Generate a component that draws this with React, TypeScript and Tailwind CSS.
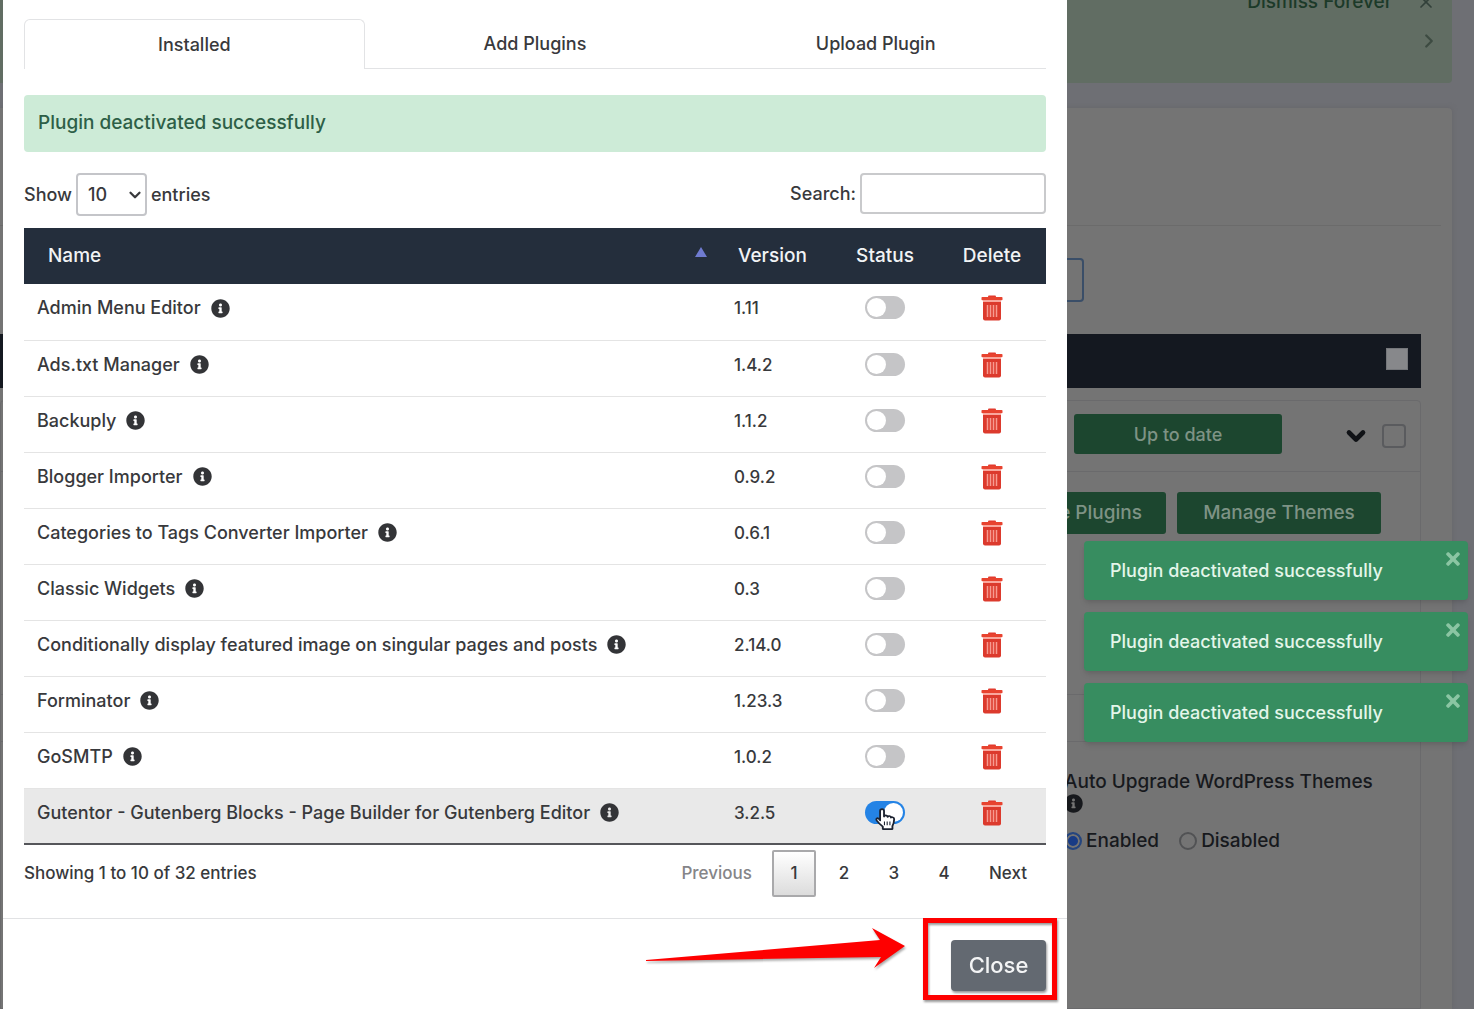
import React from "react";
import { ChevronDown, ChevronRight, X } from "lucide-react";
import { FaInfoCircle, FaTimes } from "react-icons/fa";

const plugins = [
  { name: "Admin Menu Editor", version: "1.11", active: false },
  { name: "Ads.txt Manager", version: "1.4.2", active: false },
  { name: "Backuply", version: "1.1.2", active: false },
  { name: "Blogger Importer", version: "0.9.2", active: false },
  { name: "Categories to Tags Converter Importer", version: "0.6.1", active: false },
  { name: "Classic Widgets", version: "0.3", active: false },
  { name: "Conditionally display featured image on singular pages and posts", version: "2.14.0", active: false },
  { name: "Forminator", version: "1.23.3", active: false },
  { name: "GoSMTP", version: "1.0.2", active: false },
  { name: "Gutentor - Gutenberg Blocks - Page Builder for Gutenberg Editor", version: "3.2.5", active: true },
];

function TrashIcon() {
  return (
    <svg viewBox="0 0 22 26" className="h-[26px] w-[22px]" aria-hidden="true">
      <path d="M7 3V1.600Q7 .6 8 .6h6q1 0 1 1V3" fill="#e23b2e" />
      <rect x="0.5" y="2" width="21" height="3.200" rx="0.8" fill="#e8432f" />
      <path d="M2 5h18v2H2z" fill="#f9a79d" />
      <path d="M2 7h18v16.500q0 2-2 2H4q-2 0-2-2z" fill="#dc3a2d" />
      <path d="M6.500 10v12M9.500 10v12M12.500 10v12M15.500 10v12" stroke="#f79a90" strokeWidth="1.500" />
    </svg>
  );
}

function HandCursor() {
  return (
    <svg viewBox="0 0 22 26" className="pointer-events-none absolute top-[6px] left-[8px] h-[25px] w-[24px]" preserveAspectRatio="none" aria-hidden="true">
      <path
        d="M6.500 14V4.200q0-2 1.800-2t1.800 2V10q.3-1.400 1.700-1.300 1.500.1 1.600 1.600.3-1 1.600-.9 1.400.2 1.500 1.600.5-.7 1.500-.4 1.500.4 1.400 2.200-.1 4-1.600 7V23H9v-2.500q-3-2.500-5.500-6.300-1-1.800.3-2.500 1.200-.6 2.700 2.300z"
        fill="#fff"
        stroke="#1c2230"
        strokeWidth="1.700"
        strokeLinejoin="round"
      />
      <path d="M10.500 15v4M13 15v4M15.500 15v4" stroke="#1c2230" strokeWidth="1" />
    </svg>
  );
}

function SitePage() {
  return (
    <main className="flex min-h-screen flex-col pr-[22px] text-[#17191d]">
      <section className="flex h-[83px] flex-col items-end gap-4 rounded-br bg-[#616d63] pr-4 text-[#1c3a29]">
        <div className="-mt-3 flex items-center gap-6">
          <button className="text-[19px] leading-7 font-medium">Dismiss Forever</button>
          <button aria-label="Dismiss"><X size={20} strokeWidth={2} className="text-[#32403a]" /></button>
        </div>
        <button aria-label="Next notice" className="-mt-[2px] -mr-1"><ChevronRight size={22} strokeWidth={2.5} className="text-[#3d4b42]" /></button>
      </section>

      <section className="mt-[25px] flex grow flex-col rounded-tr bg-[#747474] pr-[31px] shadow-[0_0_5px_#656569]">
        <div className="-mr-5 h-[118px] border-b border-[#6b6b6b]" />
        <div className="mt-8 flex justify-end pr-[337px]">
          <input aria-label="Filter installations" className="h-11 w-80 rounded border-2 border-[#3a4e68]" />
        </div>
        <div className="mt-8 flex h-[54px] items-center justify-end bg-[#141820] pr-[13px] pb-1">
          <input type="checkbox" aria-label="Select all" className="h-[22px] w-[22px] appearance-none border border-[#75777b] bg-[#87888b]" />
        </div>
        <div className="mt-3 flex grow flex-col rounded-t border border-[#6a6a6c]">
          <div className="flex h-[71px] items-center justify-end border-b border-[#6a6a6c] pr-[14px] pb-1">
            <button className="h-10 w-[208px] rounded-[3px] bg-[#1c462f] text-[18px] font-medium text-[#7e9385]">Up to date</button>
            <button aria-label="Show details" className="ml-[60px] pt-1"><ChevronDown size={28} strokeWidth={4} className="text-[#101216]" /></button>
            <input type="checkbox" aria-label="Select installation" className="mt-1 ml-3 h-6 w-6 appearance-none rounded border-2 border-[#5a5b5e]" />
          </div>
          <div className="mt-5 flex justify-end gap-[11px] pr-[39px] text-[19px] font-medium text-[#7e9385]">
            <button className="h-[42px] rounded-[3px] bg-[#1c462f] px-6">Manage Plugins</button>
            <button className="h-[42px] w-[204px] rounded-[3px] bg-[#1c462f]">Manage Themes</button>
          </div>
          <div className="mt-40 h-12 border-y border-[#6a6a6c]" />
          <fieldset className="mt-7 ml-auto w-[356px] text-[19px] leading-6 font-medium">
            <legend className="float-left">Auto Upgrade WordPress Themes</legend>
            <FaInfoCircle size={19} className="relative clear-both mt-[6px]" />
            <div className="mt-4 flex h-6 items-center">
              <label className="flex items-center gap-1">
                <input type="radio" name="themes" defaultChecked className="h-[18px] w-[18px] appearance-none rounded-full border-2 border-[#25457e] bg-[#183b85] shadow-[inset_0_0_0_2px_#747474]" />
                Enabled
              </label>
              <label className="ml-5 flex items-center gap-1">
                <input type="radio" name="themes" className="h-[18px] w-[18px] appearance-none rounded-full border-2 border-[#515254]" />
                Disabled
              </label>
            </div>
          </fieldset>
        </div>
      </section>
    </main>
  );
}

function PluginTable() {
  return (
    <table className="mt-3 w-full table-fixed border-collapse text-left text-[18px] leading-6 font-medium">
      <thead className="h-14 bg-[#242e3c] text-[19px] text-[#f1f3f5]">
        <tr>
          <th className="pr-[13px] pl-6 font-medium">
            <div className="flex items-center justify-between">
              Name
              <svg viewBox="0 0 12 10" className="mb-2 h-[10px] w-3" aria-hidden="true"><path d="M6 0l6 10H0z" fill="#6f7bd0" /></svg>
            </div>
          </th>
          <th className="w-28 pl-[18px] font-medium">Version</th>
          <th className="w-[106px] text-center font-medium">Status</th>
          <th className="w-[108px] text-center font-medium">Delete</th>
        </tr>
      </thead>
      <tbody>
        {plugins.map((p) => (
          <tr key={p.name} className={p.active ? "h-14 border-b-2 border-[#55565a] bg-[#e9e9e9] align-top" : "h-14 border-b border-[#e4e4e4] align-top"}>
            <td className="pt-3 pl-[13px]">
              <div className="flex items-center gap-[10px]">
                {p.name}
                <FaInfoCircle size={19} className="text-[#333437]" />
              </div>
            </td>
            <td className="pt-3 pl-[14px] text-[17px]">{p.version}</td>
            <td className="pt-3">
              <div className="relative mx-auto h-[23px] w-10">
                <input
                  type="checkbox"
                  role="switch"
                  aria-label={p.name}
                  defaultChecked={p.active}
                  className="relative block h-[23px] w-10 appearance-none rounded-full bg-[#c5c5c7] before:absolute before:top-[2px] before:left-[2px] before:h-[19px] before:w-[19px] before:rounded-full before:bg-white checked:bg-[#2483e5] checked:before:left-[19px]"
                />
                {p.active && <HandCursor />}
              </div>
            </td>
            <td className="pt-[11px]">
              <button aria-label={"Delete " + p.name} className="mx-auto block"><TrashIcon /></button>
            </td>
          </tr>
        ))}
      </tbody>
    </table>
  );
}

function PluginDialog() {
  return (
    <div role="dialog" aria-label="Manage plugins" className="flex min-w-0 grow flex-col bg-white text-[#38393c]">
      <div className="px-[21px] pt-[19px]">
        <div role="tablist" className="grid h-[50px] grid-cols-3 text-[18px] font-medium">
          <button role="tab" aria-selected="true" className="rounded-t-md border border-b-0 border-[#e2e3e5]">Installed</button>
          <button role="tab" aria-selected="false" className="border-b border-[#e2e3e5]">Add Plugins</button>
          <button role="tab" aria-selected="false" className="border-b border-[#e2e3e5]">Upload Plugin</button>
        </div>
        <p role="status" className="mt-[26px] flex h-[57px] items-center rounded bg-[#cdebd7] px-[14px] text-[19px] font-medium text-[#2d5f47]">Plugin deactivated successfully</p>

        <div className="mt-[21px] flex items-start justify-between text-[18px] font-medium">
          <label className="flex items-center gap-1">
            Show
            <span className="relative">
              <select className="h-[43px] w-[71px] appearance-none rounded border-2 border-[#c4c5c9] bg-white pl-[10px] text-[18px]">
                <option>10</option>
                <option>25</option>
                <option>50</option>
              </select>
              <ChevronDown size={18} strokeWidth={3} className="pointer-events-none absolute top-[13px] right-[3px]" />
            </span>
            entries
          </label>
          <label className="flex items-center gap-1">
            Search:
            <input type="search" className="h-[41px] w-[186px] rounded border-2 border-[#c9cacc] px-2" />
          </label>
        </div>

        <PluginTable />

        <div className="mt-[5px] flex items-center justify-between text-[17px] font-medium">
          <p>Showing 1 to 10 of 32 entries</p>
          <nav aria-label="Pages" className="flex items-center">
            <button className="px-5 text-[#858588]" disabled>Previous</button>
            <button aria-current="page" className="h-[47px] w-11 rounded-xs border-2 border-[#a9a9ab] bg-linear-to-b from-white to-[#dcdcdc]">1</button>
            <button className="ml-[6px] h-[47px] w-11">2</button>
            <button className="ml-[6px] h-[47px] w-11">3</button>
            <button className="ml-[6px] h-[47px] w-11">4</button>
            <button className="ml-1 px-[19px]">Next</button>
          </nav>
        </div>
      </div>

      <footer className="mt-[21px] flex grow items-start justify-end border-t border-[#e1e2e4] pr-[10px]">
        <svg viewBox="0 0 262 48" className="mt-2 mr-4 h-12 w-[262px] drop-shadow-[1px_2px_1px_#0005]" aria-hidden="true">
          <path d="M1 33L235 13 227 1 260 19 229 41 236 30 1 34z" fill="#fe0000" />
        </svg>
        <div className="-mt-px border-[5px] border-[#fe0000] pt-[17px] pr-[6px] pb-1 pl-[23px] drop-shadow-[1px_2px_1px_#0006]">
          <button className="h-[51px] w-[95px] rounded bg-[#636971] text-[22px] font-medium text-[#f3f4f5]">Close</button>
        </div>
      </footer>
    </div>
  );
}

function Toast() {
  return (
    <div role="alert" className="flex h-[59px] w-[384px] items-center justify-between rounded bg-[#378d60] pr-[5px] pl-[26px] text-[18px] font-medium text-[#e4f6ea] shadow-md">
      Plugin deactivated successfully
      <button aria-label="Close notification" className="mb-6"><FaTimes size={20} className="text-[#8bc5a3]" /></button>
    </div>
  );
}

export default function App() {
  return (
    <div className="relative h-screen overflow-hidden bg-[#6e6f74] font-['Inter',sans-serif]">
      <SitePage />
      <div className="absolute inset-0 flex pr-[407px] pl-[3px]">
        <PluginDialog />
      </div>
      <div className="absolute top-[541px] right-[6px] flex flex-col gap-3">
        <Toast />
        <Toast />
        <Toast />
      </div>
    </div>
  );
}
